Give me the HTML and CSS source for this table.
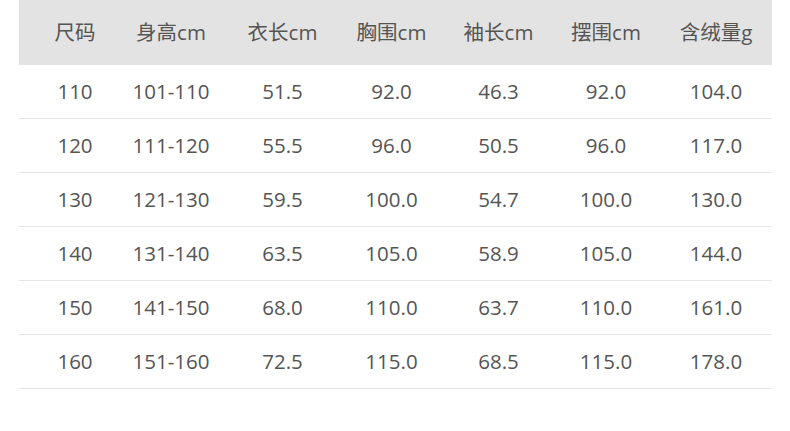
FILE: index.html
```html
<!DOCTYPE html>
<html lang="zh">
<head>
<meta charset="utf-8">
<link rel="stylesheet" href="styles.css">
</head>
<body>
<div class="page">
  <table class="size-table">
    <colgroup>
      <col class="c1"><col class="c2"><col class="c3"><col class="c4"><col class="c5"><col class="c6"><col class="c7">
    </colgroup>
    <thead>
      <tr><th>尺码</th><th>身高cm</th><th>衣长cm</th><th>胸围cm</th><th>袖长cm</th><th>摆围cm</th><th>含绒量g</th></tr>
    </thead>
    <tbody>
      <tr><td>110</td><td>101-110</td><td>51.5</td><td>92.0</td><td>46.3</td><td>92.0</td><td>104.0</td></tr>
      <tr><td>120</td><td>111-120</td><td>55.5</td><td>96.0</td><td>50.5</td><td>96.0</td><td>117.0</td></tr>
      <tr><td>130</td><td>121-130</td><td>59.5</td><td>100.0</td><td>54.7</td><td>100.0</td><td>130.0</td></tr>
      <tr><td>140</td><td>131-140</td><td>63.5</td><td>105.0</td><td>58.9</td><td>105.0</td><td>144.0</td></tr>
      <tr><td>150</td><td>141-150</td><td>68.0</td><td>110.0</td><td>63.7</td><td>110.0</td><td>161.0</td></tr>
      <tr><td>160</td><td>151-160</td><td>72.5</td><td>115.0</td><td>68.5</td><td>115.0</td><td>178.0</td></tr>
    </tbody>
  </table>
</div>
</body>
</html>
```
FILE: styles.css
```css
html, body {
  margin: 0;
  padding: 0;
  background: #ffffff;
}
.page {
  width: 790px;
  height: 431px;
  padding: 0 18px 0 19px;
  box-sizing: border-box;
}
.size-table {
  width: 753px;
  border-collapse: collapse;
  table-layout: fixed;
  font-family: "Open Sans", "Noto Sans CJK SC", sans-serif;
  font-size: 20.5px;
  line-height: 1.2;
  color: #555555;
}
.c1 { width: 104px; }
.c2 { width: 104px; }
.c3 { width: 111px; }
.c4 { width: 107px; }
.c5 { width: 107px; }
.c6 { width: 108px; }
.c7 { width: 112px; }
.size-table th {
  background: #e3e3e3;
  height: 65px;
  padding: 0;
  font-weight: normal;
  text-align: center;
  vertical-align: middle;
}
.size-table td {
  height: 53px;
  padding: 0;
  text-align: center;
  vertical-align: middle;
  border-bottom: 1px solid #e6e6e6;
}
.size-table th:first-child,
.size-table td:first-child {
  padding-left: 8px;
}
.size-table th:nth-child(2),
.size-table td:nth-child(2) {
  padding-right: 8px;
}
```
